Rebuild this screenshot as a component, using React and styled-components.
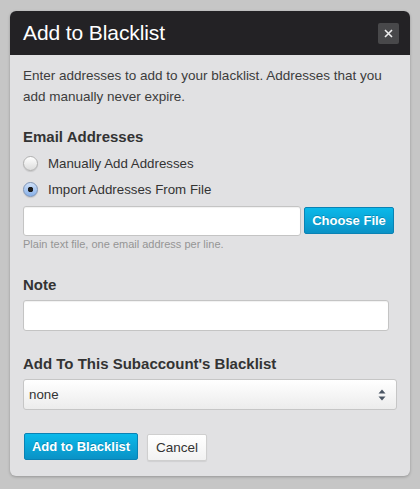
import React, { useState } from 'react';
import styled, { createGlobalStyle } from 'styled-components';

const GlobalStyle = createGlobalStyle`
  body {
    margin: 0;
    background: #c6c6c6;
    font-family: "Liberation Sans", Arial, sans-serif;
    color: #383838;
  }
`

const Page = styled.div`
  padding: 11px 10px 14px;
`

const Modal = styled.div`
  width: 400px;
  border-radius: 6px;
  overflow: hidden;
  background: #e1e1e3;
  box-shadow: 0 1px 3px rgba(0,0,0,0.25);
`

const Header = styled.div`
  height: 44px;
  background: #232225;
  display: flex;
  align-items: center;
  justify-content: space-between;
  padding: 0 11px 0 13px;
`

const Title = styled.h3`
  margin: 0;
  color: #fff;
  font-size: 21px;
  font-weight: normal;
  letter-spacing: -0.1px;
`

const CloseButton = styled.button`
  width: 21px;
  height: 21px;
  border: none;
  border-radius: 2px;
  background: #48484a;
  color: #fff;
  padding: 0;
  display: flex;
  align-items: center;
  justify-content: center;
`

const Body = styled.div`
  padding: 10px 13px 15px;
`

const Intro = styled.p`
  margin: 0;
  font-size: 13.5px;
  line-height: 21px;
  color: #3c3c3c;
`

const Label = styled.div`
  margin-top: ${p => p.top}px;
  font-size: 15px;
  line-height: 20px;
  font-weight: bold;
  color: #333;
`

const RadioGroup = styled.div`
  margin-top: 3px;
`

const RadioRow = styled.label`
  display: flex;
  align-items: center;
  height: 26px;
  font-size: 13.3px;
  color: #333;
`

const RadioDot = styled.span`
  width: 13px;
  height: 13px;
  border-radius: 50%;
  margin-right: 10px;
  border: 1px solid ${p => p.checked ? '#7f95b6' : '#b0b0b0'};
  background: ${p => p.checked
    ? 'radial-gradient(circle, #1c1c1c 0 2.5px, transparent 3px), linear-gradient(#cfe0f8, #87b0e8)'
    : 'linear-gradient(#ffffff, #dcdcdc)'};
  box-shadow: 0 1px 1px rgba(0,0,0,0.12);
`

const FileRow = styled.div`
  display: flex;
  align-items: flex-start;
  margin-top: 4px;
  gap: 3px;
`

const TextBox = styled.input`
  box-sizing: border-box;
  width: ${p => p.w}px;
  height: ${p => p.h}px;
  margin-top: ${p => p.top || 0}px;
  border: 1px solid #c4c4c4;
  border-radius: 3px;
  background: #fff;
  box-shadow: inset 0 1px 1px rgba(0,0,0,0.06);
  display: block;
  outline: none;
`

const BlueButton = styled.button`
  box-sizing: border-box;
  width: ${p => p.w}px;
  height: 27px;
  padding: 0;
  margin-top: ${p => p.top || 0}px;
  border: 1px solid #0a82b4;
  border-radius: 2px;
  background: linear-gradient(#0bb9ea, #0a92c6);
  color: #fff;
  font-family: inherit;
  font-size: 13px;
  font-weight: bold;
  white-space: nowrap;
  text-shadow: 0 -1px 0 rgba(0,0,0,0.2);
`

const Help = styled.div`
  font-size: 11px;
  line-height: 16px;
  color: #959595;
`

const SelectBox = styled.div`
  box-sizing: border-box;
  width: 374px;
  height: 31px;
  margin-top: 5px;
  border: 1px solid #c6c6c6;
  border-radius: 3px;
  background: linear-gradient(#ffffff, #ececec);
  display: flex;
  align-items: center;
  justify-content: space-between;
  padding: 0 10px 0 5px;
  font-size: 13.3px;
  color: #333;
`

const Actions = styled.div`
  display: flex;
  gap: 9px;
  margin-top: 23px;
  padding-left: 1px;
  align-items: flex-start;
`

const PlainButton = styled.button`
  box-sizing: border-box;
  width: 60px;
  height: 27px;
  margin-top: 1px;
  padding: 0;
  border: 1px solid #cfcfcf;
  border-radius: 2px;
  background: linear-gradient(#ffffff, #f2f2f2);
  color: #333;
  font-family: inherit;
  font-size: 13.5px;
  box-shadow: 0 1px 1px rgba(0,0,0,0.08);
`

const App = () => {
  const [mode, setMode] = useState('file')

  return (
    <>
      <GlobalStyle />
      <Page>
        <Modal>
          <Header>
            <Title>Add to Blacklist</Title>
            <CloseButton>
              <svg width="9" height="9" viewBox="0 0 9 9">
                <path d="M1 1 L8 8 M8 1 L1 8" stroke="#eee" strokeWidth="1.6" />
              </svg>
            </CloseButton>
          </Header>
          <Body>
            <Intro>
              Enter addresses to add to your blacklist. Addresses that you add manually never expire.
            </Intro>

            <Label top={20}>Email Addresses</Label>
            <RadioGroup>
              <RadioRow onClick={() => setMode('manual')}>
                <RadioDot checked={mode === 'manual'} />
                Manually Add Addresses
              </RadioRow>
              <RadioRow onClick={() => setMode('file')}>
                <RadioDot checked={mode === 'file'} />
                Import Addresses From File
              </RadioRow>
            </RadioGroup>
            <FileRow>
              <TextBox w={278} h={30} />
              <BlueButton w={90} top={1}>Choose File</BlueButton>
            </FileRow>
            <Help>Plain text file, one email address per line.</Help>

            <Label top={23}>Note</Label>
            <TextBox w={366} h={31} top={5} />

            <Label top={23}>Add To This Subaccount's Blacklist</Label>
            <SelectBox>
              <span>none</span>
              <svg width="8" height="12" viewBox="0 0 8 12">
                <path d="M4 0.5 L7.5 4.5 L0.5 4.5 Z M4 11.5 L7.5 7.5 L0.5 7.5 Z" fill="#4a5563" />
              </svg>
            </SelectBox>

            <Actions>
              <BlueButton w={114}>Add to Blacklist</BlueButton>
              <PlainButton>Cancel</PlainButton>
            </Actions>
          </Body>
        </Modal>
      </Page>
    </>
  )
}

export default App
